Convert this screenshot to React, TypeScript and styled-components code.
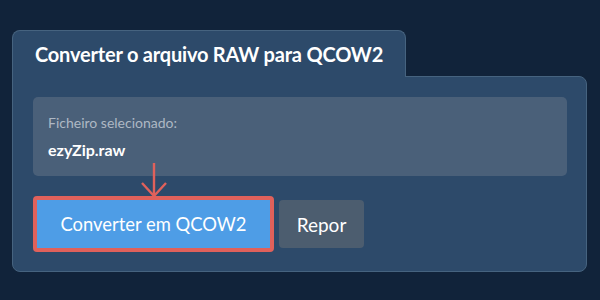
import React from "react";
import styled, { createGlobalStyle } from "styled-components";

const Global = createGlobalStyle`
  html, body { margin: 0; padding: 0; background: #11233a; }
  body { font-family: Lato, "Open Sans", sans-serif; width: 600px; height: 300px; overflow: hidden; }
`;

const Page = styled.div`
  padding: 30px 0 0 12px;
  display: flex;
  flex-direction: column;
  align-items: flex-start;
`;

const Tab = styled.div`
  position: relative;
  z-index: 1;
  box-sizing: border-box;
  width: 394px;
  height: 47px;
  margin-bottom: -1px;
  padding: 0 0 0 22px;
  display: flex;
  align-items: center;
  background: #2d4a6a;
  border: 1px solid #46637f;
  border-bottom: none;
  border-radius: 8px 8px 0 0;
  color: #ffffff;
  font-weight: 700;
  font-size: 20px;
  letter-spacing: -0.2px;
`;

const Panel = styled.div`
  box-sizing: border-box;
  width: 575px;
  height: 196px;
  padding: 20px 19px 19px 20px;
  background: #2d4a6a;
  border: 1px solid #46637f;
  border-radius: 0 8px 8px 8px;
  display: flex;
  flex-direction: column;
  gap: 20px;
`;

const FileBox = styled.div`
  box-sizing: border-box;
  height: 79px;
  padding: 17px 15px 0 15px;
  background: #4a6079;
  border-radius: 5px;
  display: flex;
  flex-direction: column;
`;

const Label = styled.div`
  color: #aeb8c4;
  font-size: 14px;
  line-height: 18px;
`;

const FileName = styled.div`
  margin-top: 8px;
  color: #ffffff;
  font-weight: 700;
  font-size: 16px;
  line-height: 20px;
`;

const Actions = styled.div`
  display: flex;
  align-items: center;
  gap: 5px;
`;

const Highlight = styled.div`
  position: relative;
  border: 4px solid #e0615b;
  border-radius: 4px;
  display: flex;
`;

const Arrow = styled.svg`
  position: absolute;
  left: 50%;
  bottom: 100%;
  margin-left: -14px;
  margin-bottom: 0px;
`;

const Button = styled.button<{ $variant: "primary" | "secondary" }>`
  box-sizing: border-box;
  height: 48px;
  padding: 0;
  width: ${(p) => (p.$variant === "primary" ? "233px" : "85px")};
  border: none;
  border-radius: ${(p) => (p.$variant === "primary" ? "0" : "4px")};
  background: ${(p) => (p.$variant === "primary" ? "#4e9de6" : "#4c5d6f")};
  color: #ffffff;
  font-family: Lato, "Open Sans", sans-serif;
  font-size: ${(p) => (p.$variant === "primary" ? "18.4px" : "19px")};
  cursor: pointer;
`;

export default function App() {
  return (
    <>
      <Global />
      <Page>
        <Tab>Converter o arquivo RAW para QCOW2</Tab>
        <Panel>
          <FileBox>
            <Label>Ficheiro selecionado:</Label>
            <FileName>ezyZip.raw</FileName>
          </FileBox>
          <Actions>
            <Highlight>
              <Arrow width="28" height="38" viewBox="0 0 28 38">
                <path
                  d="M14 1 V34 M2 21 L14 34 L26 21"
                  fill="none"
                  stroke="#e0615b"
                  strokeWidth="2.4"
                />
              </Arrow>
              <Button $variant="primary">Converter em QCOW2</Button>
            </Highlight>
            <Button $variant="secondary">Repor</Button>
          </Actions>
        </Panel>
      </Page>
    </>
  );
}
